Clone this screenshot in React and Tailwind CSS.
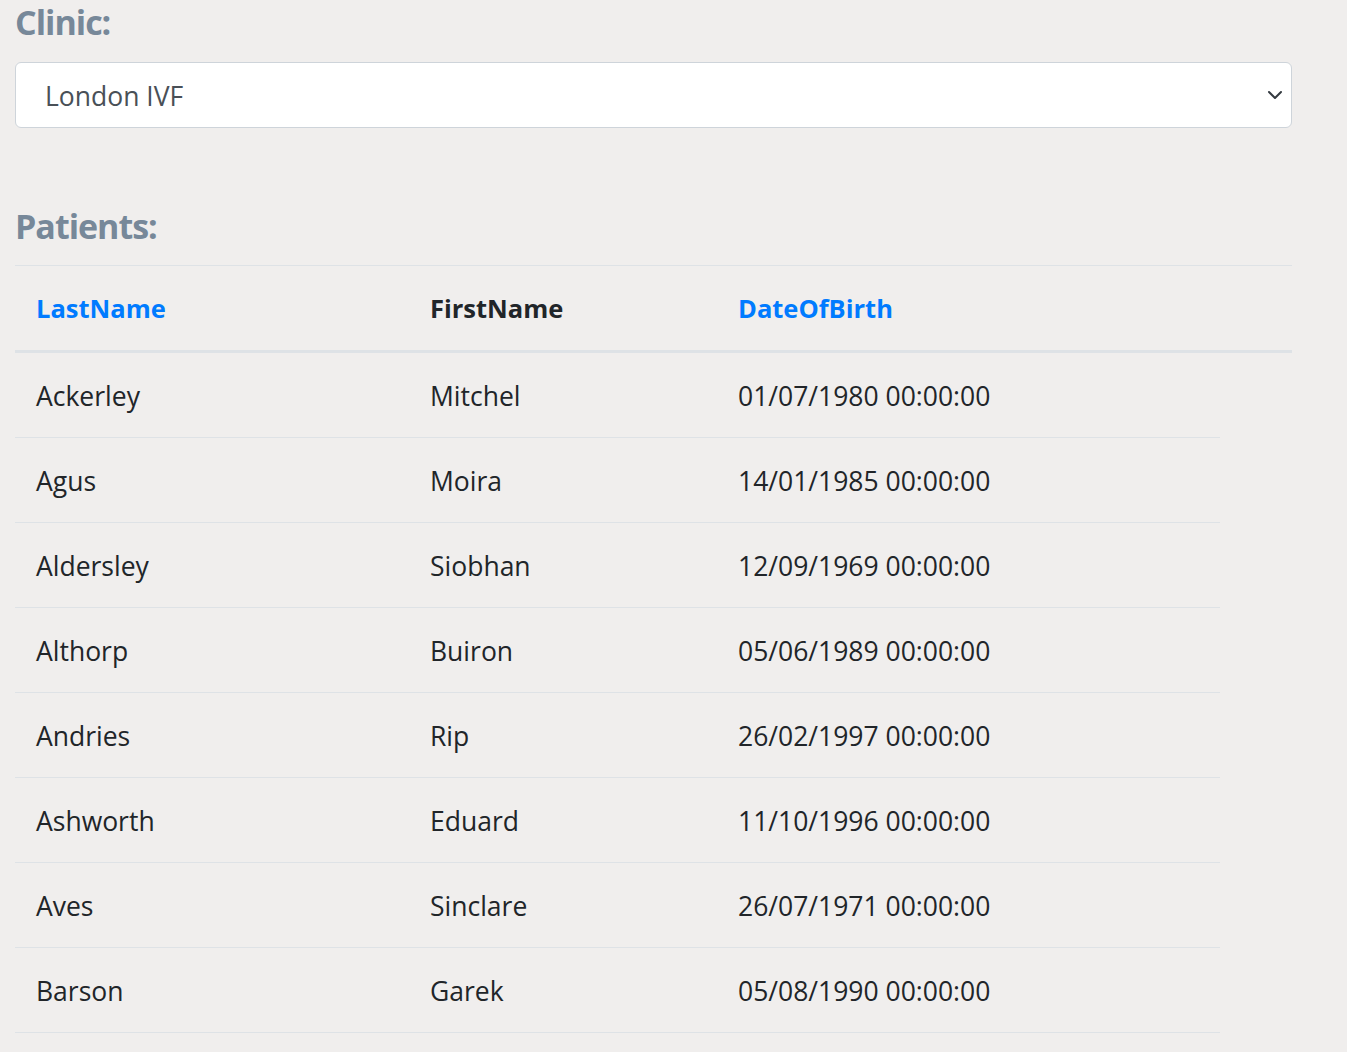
const patients = [
  ["Ackerley", "Mitchel", "01/07/1980 00:00:00"],
  ["Agus", "Moira", "14/01/1985 00:00:00"],
  ["Aldersley", "Siobhan", "12/09/1969 00:00:00"],
  ["Althorp", "Buiron", "05/06/1989 00:00:00"],
  ["Andries", "Rip", "26/02/1997 00:00:00"],
  ["Ashworth", "Eduard", "11/10/1996 00:00:00"],
  ["Aves", "Sinclare", "26/07/1971 00:00:00"],
  ["Barson", "Garek", "05/08/1990 00:00:00"],
];

function ChevronDown() {
  return (
    <svg width="16" height="16" viewBox="0 0 16 16" fill="none">
      <path d="M2 5l6 6 6-6" stroke="#343a40" strokeWidth="2" strokeLinecap="round" strokeLinejoin="round" />
    </svg>
  );
}

export default function App() {
  return (
    <div className="h-screen bg-[#f0eeed] px-[15px] font-['Open_Sans',sans-serif] overflow-hidden">
      <div className="w-[1277px]">
        <h4 className="text-[34px] leading-[44px] font-bold text-[#778899] tracking-[-1px]">Clinic:</h4>
        <div className="mt-[18px] h-[66px] bg-white border border-[#ced4da] rounded-[6px] flex items-center justify-between pl-[29px] pr-[8px]">
          <span className="text-[26.5px] text-[#495057] pt-[4px]">London IVF</span>
          <ChevronDown />
        </div>

        <h4 className="mt-[76px] text-[34px] leading-[44px] font-bold text-[#778899] tracking-[-1px]">Patients:</h4>

        <div className="mt-[17px]">
          <div className="flex h-[88px] border-t border-b-[3px] border-[#dee2e6] text-[25.5px] font-bold items-center">
            <div className="w-[394px] pl-[21px] text-[#007bff]">LastName</div>
            <div className="w-[308px] pl-[21px] text-[#212529]">FirstName</div>
            <div className="pl-[21px] text-[#007bff]">DateOfBirth</div>
          </div>
          {patients.map(([last, first, dob]) => (
            <div key={last} className="flex h-[85px] w-[1205px] border-b border-[#dee2e6] text-[26.5px] text-[#212529] items-center pt-[4px]">
              <div className="w-[394px] pl-[21px]">{last}</div>
              <div className="w-[308px] pl-[21px]">{first}</div>
              <div className="pl-[21px]">{dob}</div>
            </div>
          ))}
        </div>
      </div>
    </div>
  );
}
